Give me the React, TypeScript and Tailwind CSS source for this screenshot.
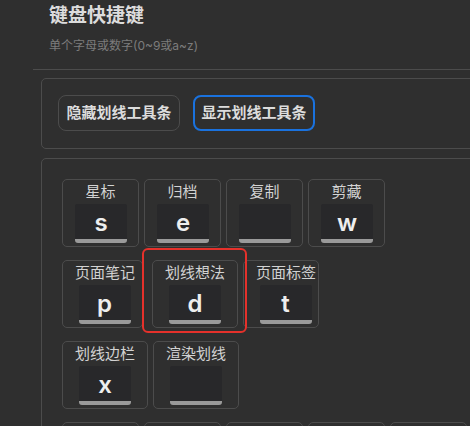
import type { ReactNode } from "react";

type KeyDef = {
  label: string;
  letter?: string;
  width?: string;
  inner?: string;
};

const FONT = { fontFamily: '"Inter", "Noto Sans CJK SC", sans-serif' };

function Keycap({ letter }: { letter?: string }) {
  return (
    <div className="mx-auto mt-[2px] w-[52px]">
      <div className="flex h-[35px] items-center justify-center rounded-t-[2px] bg-[#28282a] pt-[2px] text-[24px] font-semibold leading-none text-[#eeeeee]">
        {letter}
      </div>
      <div className="h-[4px] rounded-b-[3px] bg-[#9a9a9a]" />
    </div>
  );
}

function Key({ k }: { k: KeyDef }) {
  return (
    <div className={`h-[68px] shrink-0 rounded-[5px] border border-[#4c4c4c] ${k.width ?? ""}`}>
      <div className={`px-3 pt-[2px] ${k.inner ?? ""}`}>
        <div className="h-[20px] whitespace-nowrap text-center text-[15px] leading-[20px] text-[#d2d2d2]">{k.label}</div>
        <Keycap letter={k.letter} />
      </div>
    </div>
  );
}

function Row({ children, gap = "gap-[5px]" }: { children: ReactNode; gap?: string }) {
  return <div className={`flex ${gap}`}>{children}</div>;
}

const row1: KeyDef[] = [
  { label: "星标", letter: "s", width: "w-[77px]" },
  { label: "归档", letter: "e", width: "w-[77px]" },
  { label: "复制", width: "w-[77px]" },
  { label: "剪藏", letter: "w", width: "w-[77px]" },
];

export default function App() {
  return (
    <div className="h-[426px] w-[470px] overflow-hidden bg-[#2f2f2f]" style={FONT}>
      <div className="w-[640px]">
        <div className="pl-[49px] pt-[3px]">
          <div className="text-[19px] font-bold leading-[26px] text-[#dcdcdc]">键盘快捷键</div>
          <div className="mt-[8px] text-[12px] leading-[18px] text-[#7c7c7c]">单个字母或数字(0~9或a~z)</div>
        </div>
        <div className="ml-[33px] mt-[14px] border-t border-[#4c4c4c]" />

        <div className="ml-[41px] mt-[8px] flex gap-[13px] rounded-[5px] border border-[#4c4c4c] px-4 pb-[17px] pt-4">
          <button className="flex h-[36px] w-[122px] items-center justify-center rounded-[8px] border border-[#4c4c4c] text-[15px] font-semibold text-[#dcdcdc]">
            隐藏划线工具条
          </button>
          <button className="flex h-[36px] w-[122px] items-center justify-center rounded-[8px] border-2 border-[#1a72de] text-[15px] font-semibold text-[#dcdcdc]">
            显示划线工具条
          </button>
        </div>

        <div className="ml-[41px] mt-[9px] h-[400px] rounded-[5px] border border-[#4c4c4c] pl-[20px] pt-[20px]">
          <div className="relative flex flex-col gap-[13px]">
            <Row>
              {row1.map((k) => (
                <Key key={k.label} k={k} />
              ))}
            </Row>
            <Row gap="gap-0">
              <Key k={{ label: "页面笔记", letter: "p", width: "w-[81px]", inner: "w-[83px]" }} />
              <div className="ml-[9px]">
                <Key k={{ label: "划线想法", letter: "d" }} />
              </div>
              <div className="ml-[5px]">
                <Key k={{ label: "页面标签", letter: "t", width: "w-[76px]", inner: "w-[83px]" }} />
              </div>
            </Row>
            <Row>
              <Key k={{ label: "划线边栏", letter: "x" }} />
              <Key k={{ label: "渲染划线" }} />
            </Row>
            <Row>
              {[0, 1, 2, 3, 4].map((i) => (
                <div key={i} className="h-[68px] w-[77px] shrink-0 rounded-[5px] border border-[#4c4c4c]" />
              ))}
            </Row>
            <div className="pointer-events-none absolute left-[80px] top-[69px] h-[85px] w-[105px] rounded-[6px] border-2 border-[#e5312b]" />
          </div>
        </div>
      </div>
    </div>
  );
}
